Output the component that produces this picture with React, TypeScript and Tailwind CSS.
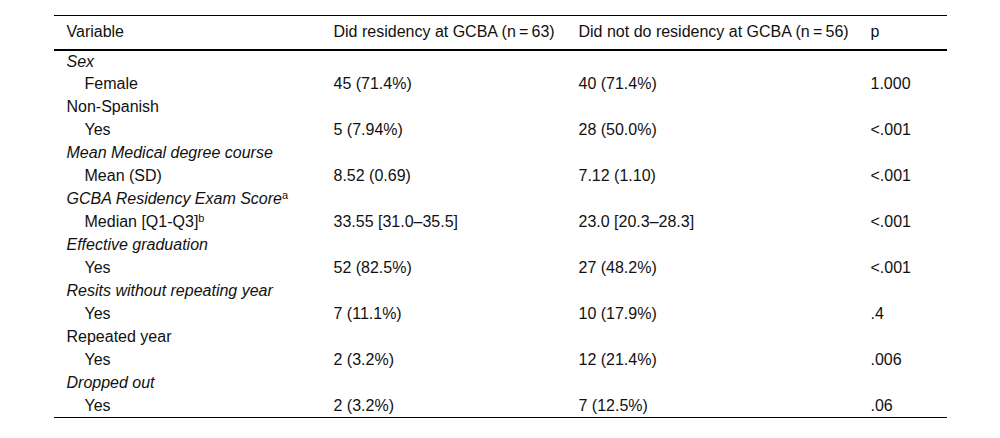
import React from "react";

type Row = { label: React.ReactNode; italic?: boolean; indent?: boolean; a?: string; b?: string; p?: string };

const rows: Row[] = [
  { label: "Sex", italic: true },
  { label: "Female", indent: true, a: "45 (71.4%)", b: "40 (71.4%)", p: "1.000" },
  { label: "Non-Spanish" },
  { label: "Yes", indent: true, a: "5 (7.94%)", b: "28 (50.0%)", p: "<.001" },
  { label: "Mean Medical degree course", italic: true },
  { label: "Mean (SD)", indent: true, a: "8.52 (0.69)", b: "7.12 (1.10)", p: "<.001" },
  { label: <>GCBA Residency Exam Score<sup className="text-[11px] not-italic">a</sup></>, italic: true },
  { label: <>Median [Q1-Q3]<sup className="text-[11px]">b</sup></>, indent: true, a: "33.55 [31.0–35.5]", b: "23.0 [20.3–28.3]", p: "<.001" },
  { label: "Effective graduation", italic: true },
  { label: "Yes", indent: true, a: "52 (82.5%)", b: "27 (48.2%)", p: "<.001" },
  { label: "Resits without repeating year", italic: true },
  { label: "Yes", indent: true, a: "7 (11.1%)", b: "10 (17.9%)", p: ".4" },
  { label: "Repeated year" },
  { label: "Yes", indent: true, a: "2 (3.2%)", b: "12 (21.4%)", p: ".006" },
  { label: "Dropped out", italic: true },
  { label: "Yes", indent: true, a: "2 (3.2%)", b: "7 (12.5%)", p: ".06" },
];

export default function App() {
  return (
    <div className="w-[1000px] h-[438px] bg-white pt-[15px]" style={{ fontFamily: '"Liberation Sans", Arial, sans-serif' }}>
      <table className="mx-auto w-[893px] border-collapse text-[16px] text-[#111] leading-[18px]">
        <thead>
          <tr className="border-t border-black border-b-2 h-[34px]">
            <th className="font-normal text-left pl-[13px] w-[267px]">Variable</th>
            <th className="font-normal text-left pl-[13px] w-[245px]">Did residency at GCBA (n{"\u2009=\u2009"}63)</th>
            <th className="font-normal text-left pl-[13px] w-[292px]">Did not do residency at GCBA (n{"\u2009=\u2009"}56)</th>
            <th className="font-normal text-left pl-[13px]">p</th>
          </tr>
        </thead>
        <tbody className="border-b border-black">
          {rows.map((r, i) => (
            <tr key={i} className="h-[23px]">
              <td className={`${r.indent ? "pl-[31px]" : "pl-[13px]"} ${r.italic ? "italic" : ""}`}>{r.label}</td>
              <td className="pl-[13px]">{r.a ?? ""}</td>
              <td className="pl-[13px]">{r.b ?? ""}</td>
              <td className="pl-[13px]">{r.p ?? ""}</td>
            </tr>
          ))}
        </tbody>
      </table>
    </div>
  );
}
